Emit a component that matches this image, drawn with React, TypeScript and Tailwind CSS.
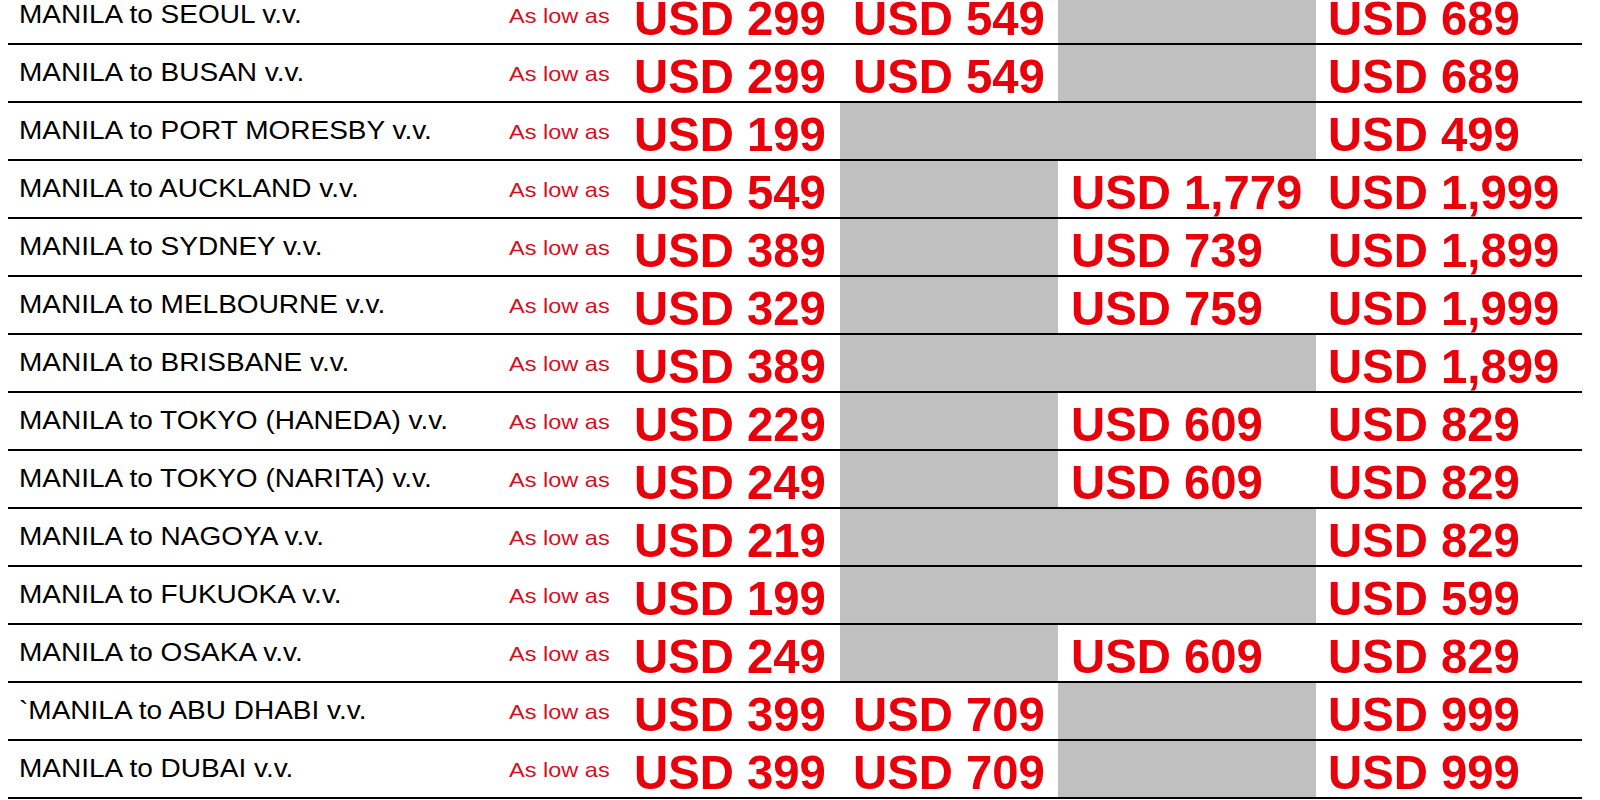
import React from "react";

type Cell = string | null;
type Row = { route: string; prices: [Cell, Cell, Cell, Cell] };

const rows: Row[] = [
  { route: "MANILA to SEOUL v.v.", prices: ["USD 299", "USD 549", null, "USD 689"] },
  { route: "MANILA to BUSAN v.v.", prices: ["USD 299", "USD 549", null, "USD 689"] },
  { route: "MANILA to PORT MORESBY v.v.", prices: ["USD 199", null, null, "USD 499"] },
  { route: "MANILA to AUCKLAND v.v.", prices: ["USD 549", null, "USD 1,779", "USD 1,999"] },
  { route: "MANILA to SYDNEY v.v.", prices: ["USD 389", null, "USD 739", "USD 1,899"] },
  { route: "MANILA to MELBOURNE v.v.", prices: ["USD 329", null, "USD 759", "USD 1,999"] },
  { route: "MANILA to BRISBANE v.v.", prices: ["USD 389", null, null, "USD 1,899"] },
  { route: "MANILA to TOKYO (HANEDA) v.v.", prices: ["USD 229", null, "USD 609", "USD 829"] },
  { route: "MANILA to TOKYO (NARITA) v.v.", prices: ["USD 249", null, "USD 609", "USD 829"] },
  { route: "MANILA to NAGOYA v.v.", prices: ["USD 219", null, null, "USD 829"] },
  { route: "MANILA to FUKUOKA v.v.", prices: ["USD 199", null, null, "USD 599"] },
  { route: "MANILA to OSAKA v.v.", prices: ["USD 249", null, "USD 609", "USD 829"] },
  { route: "`MANILA to ABU DHABI v.v.", prices: ["USD 399", "USD 709", null, "USD 999"] },
  { route: "MANILA to DUBAI v.v.", prices: ["USD 399", "USD 709", null, "USD 999"] },
];

const padClasses = ["pl-[12px]", "pl-[13px]", "pl-[13px]", "pl-[12px]"];

function PriceCell({ value, idx }: { value: Cell; idx: number }) {
  if (value === null) {
    return <div className="bg-[#c0c0c0] h-full" />;
  }
  return (
    <div className={`flex items-center h-full pt-[6px] ${padClasses[idx]}`}>
      <span className="inline-block origin-left scale-x-[0.965] whitespace-nowrap text-[49px] leading-none font-bold text-[#e8000a] font-['Liberation_Sans',Arial,sans-serif]">
        {value}
      </span>
    </div>
  );
}

export default function App() {
  return (
    <div className="h-screen w-full overflow-hidden bg-white font-['Liberation_Sans',Arial,sans-serif]">
      <div className="-mt-[13px] ml-[8px]">
        {rows.map((r, i) => (
          <div
            key={i}
            className="grid grid-cols-[482px_132px_218px_218px_258px_266px] w-[1574px] h-[58px] border-b-2 border-black"
          >
            <div className="flex items-center h-full pl-[11px] pb-[2px]">
              <span className="inline-block whitespace-nowrap origin-left scale-x-[1.12] text-[25px] leading-none text-black">
                {r.route}
              </span>
            </div>
            <div className="flex items-center h-full pl-[19px]">
              <span className="inline-block whitespace-nowrap origin-left scale-x-[1.12] text-[21px] leading-none text-[#d4101e]">
                As low as
              </span>
            </div>
            {r.prices.map((p, j) => (
              <PriceCell key={j} value={p} idx={j} />
            ))}
          </div>
        ))}
      </div>
    </div>
  );
}
